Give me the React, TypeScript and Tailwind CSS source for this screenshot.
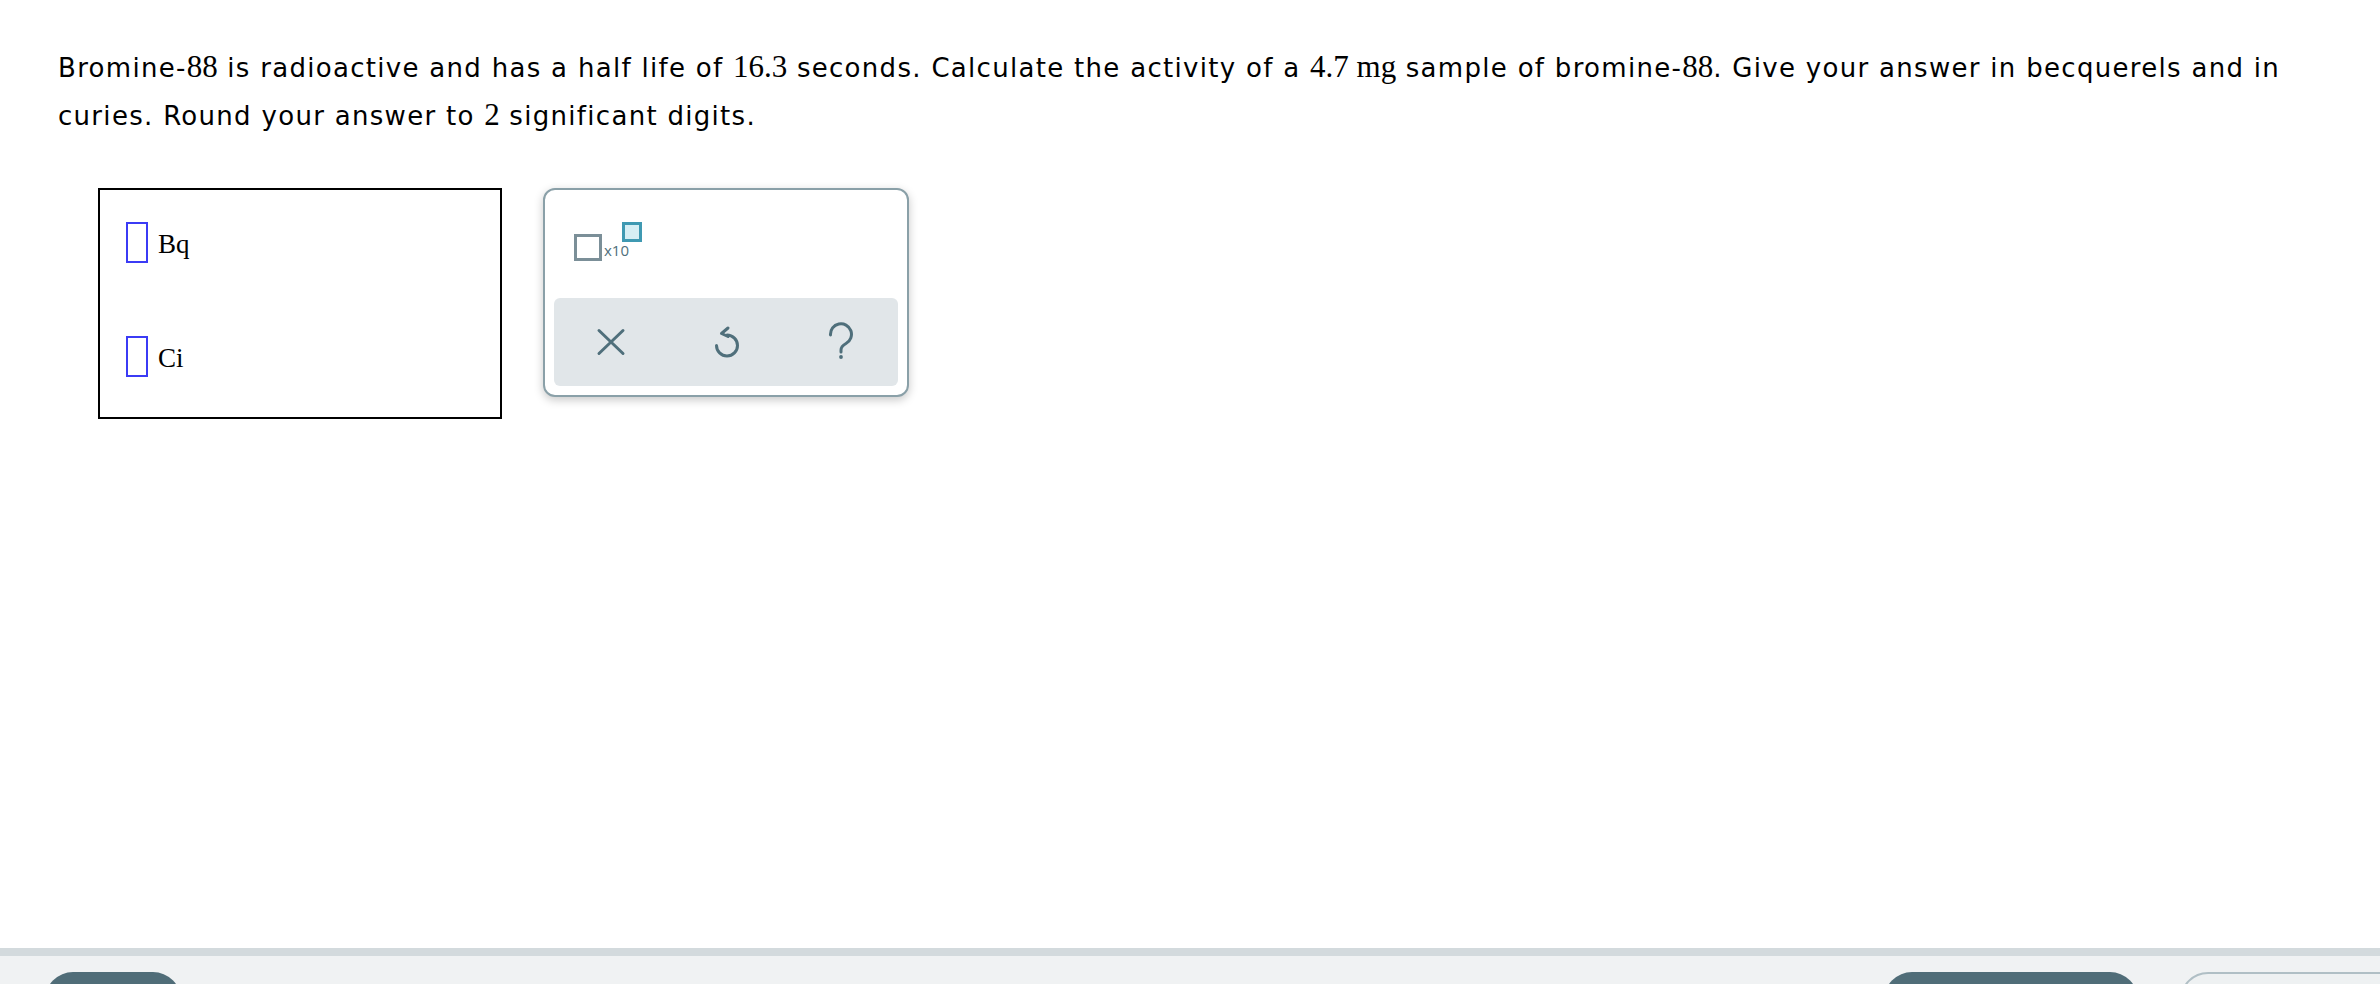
import React from "react";

const M = ({ children }: { children: React.ReactNode }) => (
  <span className="text-[31px] leading-none tracking-normal" style={{ fontFamily: '"Liberation Serif", "Times New Roman", serif' }}>
    {children}
  </span>
);

function XIcon() {
  return (
    <svg width="40" height="40" viewBox="0 0 40 40" fill="none" stroke="#4f6f7b" strokeWidth="3" strokeLinecap="round">
      <path d="M8 8.5 L32 31.5 M32 8.5 L8 31.5" />
    </svg>
  );
}

function UndoIcon() {
  return (
    <svg width="40" height="40" viewBox="0 0 40 40" fill="none" stroke="#4f6f7b" strokeWidth="3" strokeLinecap="round" strokeLinejoin="round">
      <path d="M21 13 A10.5 10.5 0 1 1 10.5 23.5" />
      <path d="M22 6 L15.5 11.5 L22 14.5" />
    </svg>
  );
}

function HelpIcon() {
  return (
    <svg width="40" height="40" viewBox="0 0 40 40" fill="none" stroke="#4f6f7b" strokeWidth="3" strokeLinecap="round" strokeLinejoin="round">
      <path d="M9.5 13 A10.5 10.5 0 1 1 25 21.5 C21.5 23.5 20 25 20 28 L20 30" />
      <circle cx="20" cy="35" r="1.9" fill="#4f6f7b" stroke="none" />
    </svg>
  );
}

export default function App() {
  return (
    <div className="h-[984px] w-full flex flex-col bg-white overflow-hidden">
      <div className="flex-1 px-[58px] pt-[44px]">
        <p
          className="text-[26px] leading-[48px] tracking-[1.3px] text-black"
          style={{ fontFamily: '"DejaVu Sans", Verdana, sans-serif' }}
        >
          Bromine-<M>88</M> is radioactive and has a half life of <M>16.3</M> seconds. Calculate the activity of a{" "}
          <M>4.7 mg</M> sample of bromine-<M>88</M>. Give your answer in becquerels and in curies. Round your answer to{" "}
          <M>2</M> significant digits.
        </p>

        <div className="flex items-start mt-[48px] ml-[40px]">
          <div className="w-[404px] h-[231px] border-2 border-black pl-[26px] pt-[32px] flex flex-col gap-[73px]">
            <div className="flex items-center gap-[10px]">
              <div className="w-[22px] h-[41px] border-2 border-[#3b3bf5]" />
              <span
                className="text-[27px] leading-none mt-[3px] text-black"
                style={{ fontFamily: '"Liberation Serif", "Times New Roman", serif' }}
              >
                Bq
              </span>
            </div>
            <div className="flex items-center gap-[10px]">
              <div className="w-[22px] h-[41px] border-2 border-[#3b3bf5]" />
              <span
                className="text-[27px] leading-none mt-[3px] text-black"
                style={{ fontFamily: '"Liberation Serif", "Times New Roman", serif' }}
              >
                Ci
              </span>
            </div>
          </div>

          <div className="ml-[41px] w-[366px] h-[209px] border-2 border-[#8aa0a8] rounded-[12px] bg-white shadow-[0_3px_10px_rgba(0,0,0,0.22)] flex flex-col px-[9px] pb-[9px]">
            <div className="flex-1 pl-[20px] pt-[32px]">
              <div className="flex items-start">
                <div className="mt-[12px] w-[28px] h-[27px] border-[3px] border-[#7b8f98]" />
                <span
                  className="mt-[21px] ml-[2px] text-[15px] leading-none text-[#4f6f7b]"
                  style={{ fontFamily: '"Open Sans", "Lato", sans-serif' }}
                >
                  x10
                </span>
                <div className="ml-[-7px] w-[20px] h-[20px] border-[3px] border-[#3f99b2] bg-[#d6eef4]" />
              </div>
            </div>
            <div className="h-[88px] rounded-[6px] bg-[#e1e6e9] grid grid-cols-3 items-center justify-items-center">
              <XIcon />
              <UndoIcon />
              <HelpIcon />
            </div>
          </div>
        </div>
      </div>

      <div className="h-[36px] shrink-0 border-t-[8px] border-[#d3dadd] bg-[#f0f2f3] flex items-start pt-[16px] overflow-hidden">
        <div className="ml-[45px] w-[136px] h-[60px] shrink-0 rounded-[28px] bg-[#506d78]" />
        <div className="ml-auto flex gap-[42px] mr-[-40px] shrink-0">
          <div className="w-[254px] h-[60px] rounded-[28px] bg-[#506d78]" />
          <div className="w-[240px] h-[60px] rounded-[28px] bg-[#eef1f2] border-2 border-[#b0bfc5]" />
        </div>
      </div>
    </div>
  );
}
